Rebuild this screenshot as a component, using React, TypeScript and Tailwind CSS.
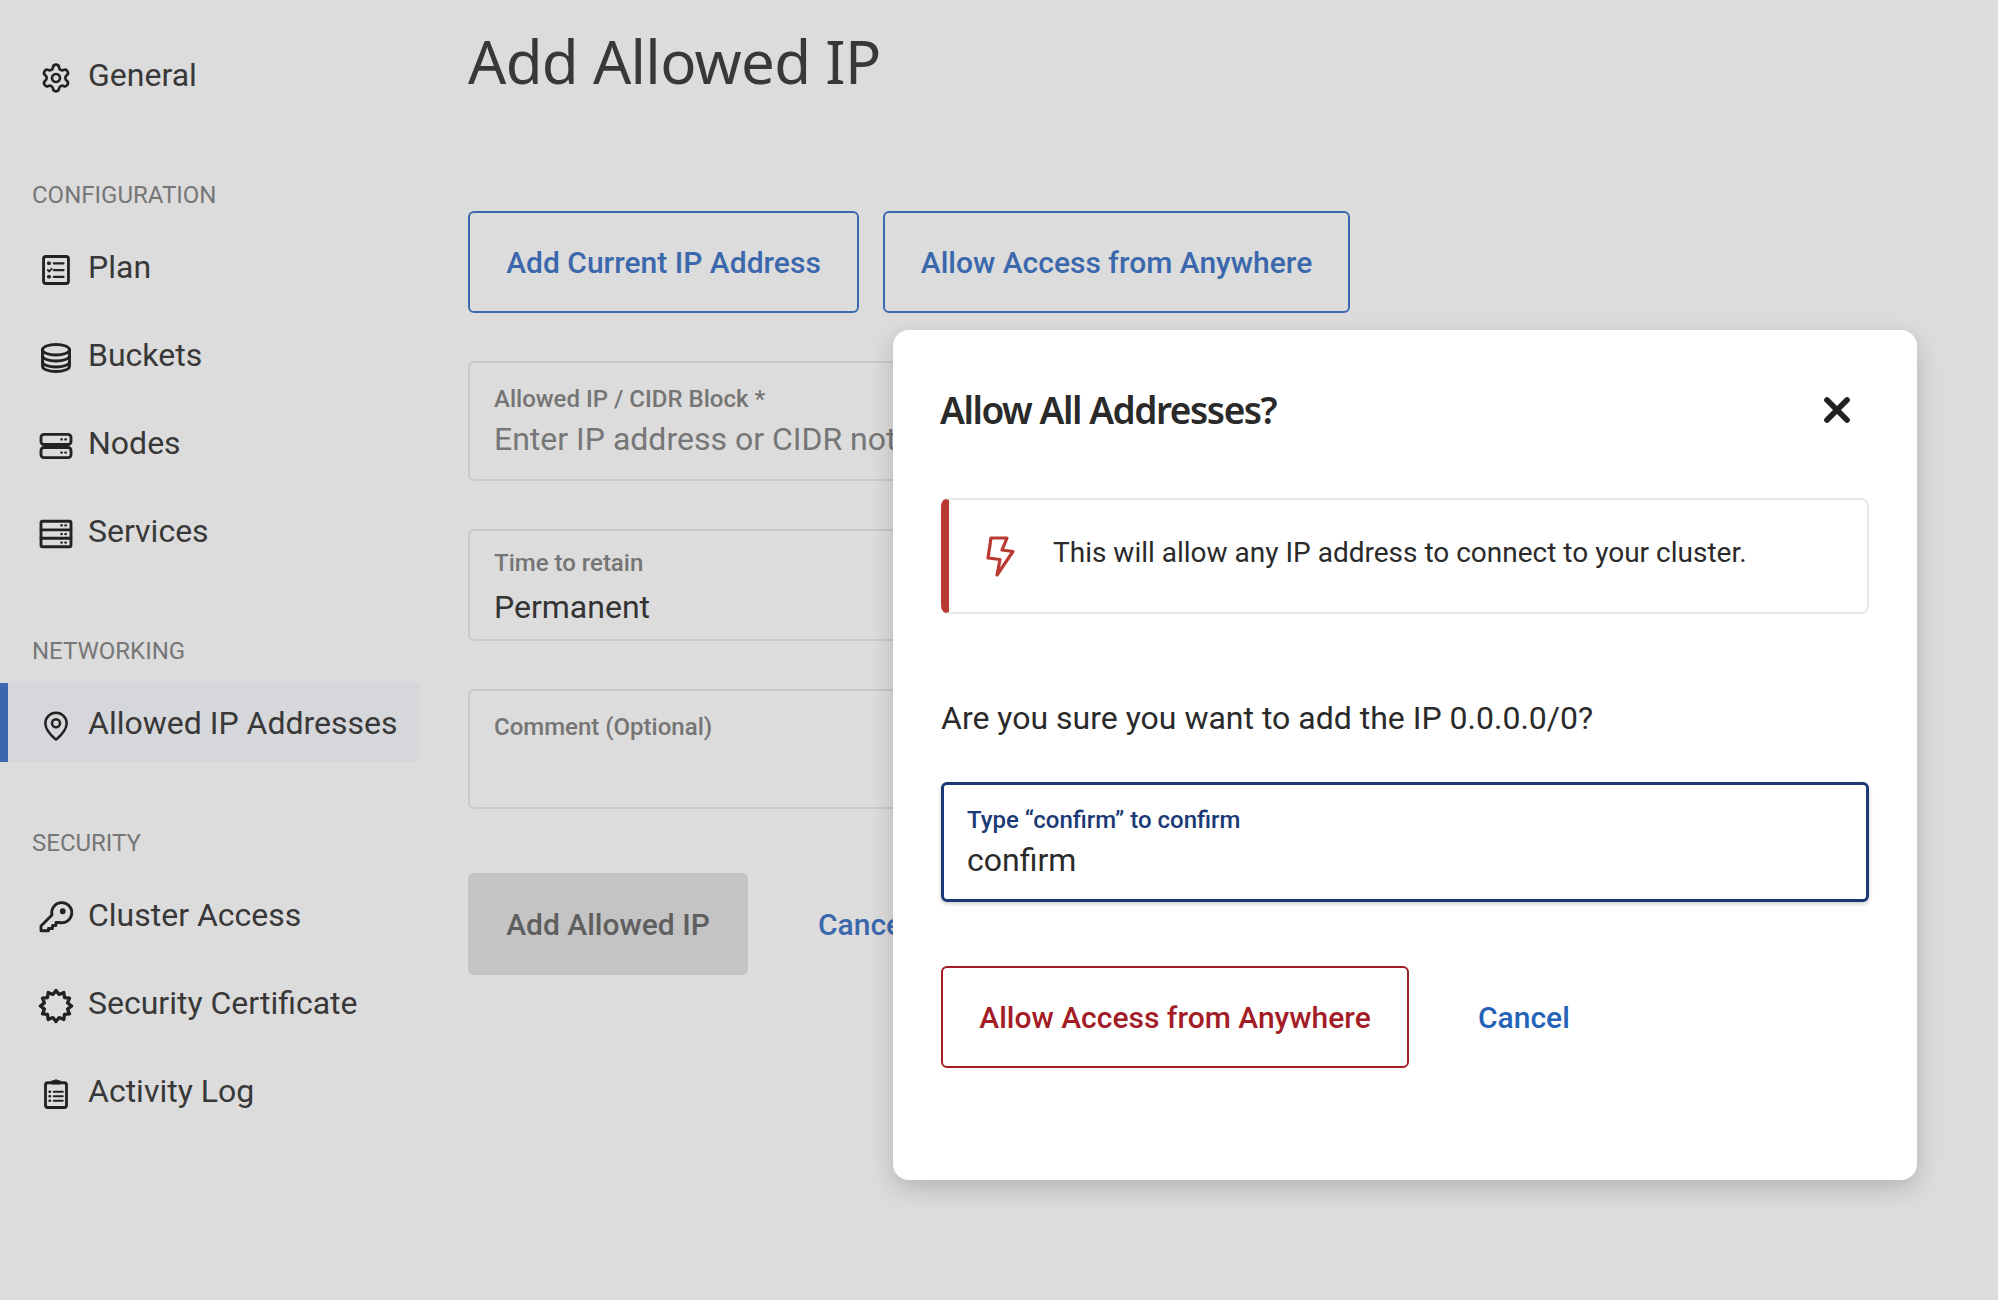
import { MapPin, Settings, X } from 'lucide-react';
import type { ReactNode } from 'react';

const iconProps = {
  width: 36,
  height: 36,
  viewBox: '0 0 24 24',
  fill: 'none',
  stroke: '#222',
  strokeWidth: 1.900,
  strokeLinecap: 'round' as const,
  strokeLinejoin: 'round' as const,
};

function PlanIcon() {
  return (
    <svg {...iconProps}>
      <rect x="3.700" y="3" width="16.600" height="18" rx="1.500" />
      <path d="M10.500 7.500h6.500M10.500 12h6.500M10.500 16.500h6.500" strokeWidth="1.500" />
      <path d="M7 7.500h.6M7 16.500h.6" strokeWidth="2.200" />
      <path d="M6.500 12l1 1 1.500-1.800" strokeWidth="1.200" />
    </svg>
  );
}

function BucketsIcon() {
  return (
    <svg {...iconProps}>
      <ellipse cx="12" cy="6.500" rx="9" ry="3.500" />
      <path d="M3 6.500v11c0 2 4 3.500 9 3.500s9-1.500 9-3.500v-11" />
      <path d="M3 10.500c0 2 4 3.500 9 3.500s9-1.500 9-3.500M3 14.500c0 2 4 3.500 9 3.500s9-1.500 9-3.500" />
    </svg>
  );
}

function NodesIcon() {
  return (
    <svg {...iconProps}>
      <rect x="2" y="4.250" width="20" height="6.750" rx="2" />
      <rect x="2" y="13" width="20" height="6.750" rx="2" />
      <path d="M15.500 7.600h.4M18.200 7.600h.4M15.500 16.400h.4M18.200 16.400h.4" strokeWidth="1.500" />
    </svg>
  );
}

function ServicesIcon() {
  return (
    <svg {...iconProps}>
      <rect x="2" y="3.500" width="20" height="17" rx="1" />
      <path d="M2 9.200h20M2 14.800h20" />
      <path d="M15.500 6.300h.4M18.200 6.300h.4M15.500 12h.4M18.200 12h.4M15.500 17.700h.4M18.200 17.700h.4" strokeWidth="1.500" />
    </svg>
  );
}

function KeyIcon() {
  return (
    <svg {...iconProps}>
      <path d="M2 20.500v-3.200l7.300-7.300a6.700 6.700 0 1 1 5 5h-2.300v2h-2.300v2h-2.700v1.500z" />
      <circle cx="16.500" cy="7.500" r="1" fill="#222" />
    </svg>
  );
}

function CertificateIcon() {
  const points: string[] = [];
  for (let i = 0; i < 24; i++) {
    const r = i % 2 === 0 ? 10.400 : 8;
    const a = (i * Math.PI) / 12;
    points.push(`${(12 + r * Math.sin(a)).toFixed(2)},${(12 - r * Math.cos(a)).toFixed(2)}`);
  }
  return (
    <svg {...iconProps}>
      <polygon points={points.join(' ')} strokeWidth="2.200" />
    </svg>
  );
}

function LogIcon() {
  return (
    <svg {...iconProps}>
      <rect x="5" y="4.500" width="14" height="16.500" rx="1.500" />
      <path d="M9.500 5V3.500h1.400a1.200 1.200 0 0 1 2.200 0h1.400V5z" fill="#222" strokeWidth="1.200" />
      <path d="M10.500 10.500H16.500M10.500 13.500H16.500M10.500 16.500H16.500" strokeWidth="1.400" />
      <path d="M7.700 10.500h.3M7.700 13.500h.3M7.700 16.500h.3" strokeWidth="1.600" />
    </svg>
  );
}

function BoltIcon() {
  return (
    <svg width="29" height="41" viewBox="0 0 29 41" fill="none" stroke="#b83a32" strokeWidth="3.200" strokeLinejoin="round">
      <path d="M5 2h16l-5 12 11 1.500L11 39l3-15.500L2 22z" />
    </svg>
  );
}

function NavItem({ icon, label, active }: { icon: ReactNode; label: string; active?: boolean }) {
  return (
    <div
      className={`flex h-[79px] w-[420px] items-center border-l-[8px] pl-[30px] ${
        active ? 'border-[#3b68ad] bg-[#d6d7db]' : 'border-transparent'
      }`}
    >
      <span className="mt-[6px] flex w-[36px] justify-center">{icon}</span>
      <span className="ml-[14px] text-[32px] text-[#383838]">{label}</span>
    </div>
  );
}

function SectionLabel({ children }: { children: string }) {
  return <p className="h-[30px] pl-[32px] text-[24px] leading-[30px] text-[#767676]">{children}</p>;
}

function Sidebar() {
  return (
    <aside className="flex w-[420px] shrink-0 flex-col">
      <div className="pt-[35px]">
        <NavItem icon={<Settings size={32} color="#222" strokeWidth={2} />} label="General" />
      </div>
      <div className="mt-[66px]">
        <SectionLabel>CONFIGURATION</SectionLabel>
      </div>
      <div className="mt-[17px] flex flex-col gap-[9px]">
        <NavItem icon={<PlanIcon />} label="Plan" />
        <NavItem icon={<BucketsIcon />} label="Buckets" />
        <NavItem icon={<NodesIcon />} label="Nodes" />
        <NavItem icon={<ServicesIcon />} label="Services" />
      </div>
      <div className="mt-[66px]">
        <SectionLabel>NETWORKING</SectionLabel>
      </div>
      <div className="mt-[17px]">
        <NavItem active icon={<MapPin size={32} color="#222" strokeWidth={1.900} />} label="Allowed IP Addresses" />
      </div>
      <div className="mt-[66px]">
        <SectionLabel>SECURITY</SectionLabel>
      </div>
      <div className="mt-[17px] flex flex-col gap-[9px]">
        <NavItem icon={<KeyIcon />} label="Cluster Access" />
        <NavItem icon={<CertificateIcon />} label="Security Certificate" />
        <NavItem icon={<LogIcon />} label="Activity Log" />
      </div>
    </aside>
  );
}

function Field({ label, value, muted, box, gap }: { label: string; value?: string; muted?: boolean; box: string; gap?: string }) {
  return (
    <div className={`w-[900px] rounded-[6px] border-2 border-[#c9c9c9] px-[24px] ${box}`}>
      <p className="text-[24px] font-medium leading-[30px] text-[#757575]">{label}</p>
      {value && (
        <p className={`whitespace-nowrap text-[32px] leading-[42px] ${gap} ${muted ? 'text-[#767676]' : 'text-[#333]'}`}>
          {value}
        </p>
      )}
    </div>
  );
}

function MainPanel() {
  return (
    <main className="ml-[48px] flex flex-col">
      <h1 className="mt-[21px] h-[80px] font-['Noto_Sans'] text-[60px] leading-[80px] tracking-[-0.7px] text-[#383838]">
        Add Allowed IP
      </h1>
      <div className="mt-[110px] flex gap-[24px]">
        <button className="h-[102px] w-[391px] rounded-[6px] border-2 border-[#3b68ad] text-[30px] font-medium text-[#3b68ad]">
          Add Current IP Address
        </button>
        <button className="h-[102px] w-[467px] rounded-[6px] border-2 border-[#3b68ad] text-[30px] font-medium text-[#3b68ad]">
          Allow Access from Anywhere
        </button>
      </div>
      <div className="mt-[48px] flex flex-col gap-[48px]">
        <Field label="Allowed IP / CIDR Block *" value="Enter IP address or CIDR notation" muted box="h-[120px] pt-[21px]" gap="mt-[4px]" />
        <Field label="Time to retain" value="Permanent" box="h-[112px] pt-[17px]" gap="mt-[8px]" />
        <Field label="Comment (Optional)" box="h-[120px] pt-[21px]" />
      </div>
      <div className="mt-[64px] flex items-center">
        <button className="h-[102px] w-[280px] rounded-[6px] bg-[#c4c4c4] text-[30px] font-medium text-[#5f5f5f]">
          Add Allowed IP
        </button>
        <span className="ml-[70px] text-[30px] font-medium text-[#3b68ad]">Cancel</span>
      </div>
    </main>
  );
}

function ConfirmDialog() {
  return (
    <div className="absolute left-[893px] top-[330px] flex h-[850px] w-[1024px] flex-col rounded-[16px] bg-white px-[48px] font-['Roboto',sans-serif] shadow-[0_8px_24px_rgba(0,0,0,0.18)]">
      <div className="flex h-[160px] items-center justify-between pr-[12px]">
        <h2 className="-ml-[1px] font-['Noto_Sans'] text-[37px] font-semibold tracking-[-1.450px] text-[#2a2a2a]">Allow All Addresses?</h2>
        <X size={40} color="#222" strokeWidth={3.400} />
      </div>
      <div className="mt-[8px] flex h-[116px] items-center rounded-[8px] border-2 border-l-[8px] border-[#e6e6e6] border-l-[#b83a32] pl-[37px]">
        <BoltIcon />
        <p className="mb-[6px] ml-[38px] text-[28px] text-[#2a2a2a]">
          This will allow any IP address to connect to your cluster.
        </p>
      </div>
      <p className="mt-[83px] text-[32px] leading-[42px] text-[#2a2a2a]">
        Are you sure you want to add the IP 0.0.0.0/0?
      </p>
      <div className="mt-[43px] h-[120px] rounded-[6px] border-[3px] border-[#1b3a75] px-[23px] pt-[20px] shadow-[0_2px_4px_rgba(0,0,0,0.2)]">
        <p className="text-[24px] font-medium leading-[30px] text-[#1b3a75]">Type “confirm” to confirm</p>
        <p className="mt-[4px] text-[32px] leading-[42px] text-[#2a2a2a]">confirm</p>
      </div>
      <div className="mt-[64px] flex items-center">
        <button className="h-[102px] w-[468px] rounded-[6px] border-2 border-[#a31d26] text-[30px] font-medium text-[#a31d26]">
          Allow Access from Anywhere
        </button>
        <span className="ml-[69px] text-[30px] font-medium text-[#2563b8]">Cancel</span>
      </div>
    </div>
  );
}

export default function App() {
  return (
    <div className="relative flex h-[1300px] w-[1998px] overflow-hidden bg-[#dcdcdc] font-['Roboto',sans-serif]">
      <Sidebar />
      <MainPanel />
      <ConfirmDialog />
    </div>
  );
}
